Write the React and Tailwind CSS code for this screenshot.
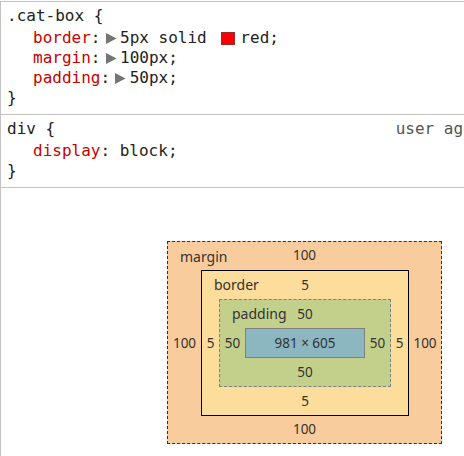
import React from "react";

function Tri() {
  return (
    <span className="flex h-[20px] w-[19.6px] shrink-0 items-center pl-[5.3px] pt-[1px]">
      <svg width="11" height="11" viewBox="0 0 11 11">
        <path d="M0 0 L10.6 5.5 L0 11 Z" fill="#747474" />
      </svg>
    </span>
  );
}

function Prop({ name, children }) {
  return (
    <div className="flex h-[20px] items-center whitespace-pre pl-[32px]">
      <span className="text-[#c80000]">{name}</span>
      <span>:</span>
      {children}
    </div>
  );
}

export default function App() {
  return (
    <div className="h-[456px] w-[464px] overflow-hidden bg-white">
      <div className="mt-px h-[455px] w-[608px] border-l border-t border-[#c2c2c2] font-['DejaVu_Sans_Mono',monospace] text-[16px] leading-[20px] text-[#222]">
        {/* rule 1 */}
        <div className="border-b border-[#c2c2c2] pb-[6px] pl-[6px] pt-[4px]">
          <div className="h-[20px] whitespace-pre">.cat-box {"{"}</div>
          <div className="-ml-[6px] mt-[2px]">
            <Prop name="border">
              <Tri />
              <span>5px solid </span>
              <span className="ml-[5px] mr-[5px] h-[13px] w-[14px] shrink-0 border border-[#9a2a2a] bg-[#ff0000]" />
              <span>red;</span>
            </Prop>
            <Prop name="margin">
              <Tri />
              <span>100px;</span>
            </Prop>
            <Prop name="padding">
              <Tri />
              <span>50px;</span>
            </Prop>
          </div>
          <div className="h-[20px]">{"}"}</div>
        </div>
        {/* rule 2 */}
        <div className="border-b border-[#c2c2c2] pb-[6px] pl-[6px] pt-[4px]">
          <div className="flex h-[20px] justify-between whitespace-pre pr-[10px]">
            <span>div {"{"}</span>
            <span className="text-[#555]">user agent stylesheet</span>
          </div>
          <div className="-ml-[6px] mt-[2px]">
            <Prop name="display">
              <span> block;</span>
            </Prop>
          </div>
          <div className="h-[20px]">{"}"}</div>
        </div>
        {/* box model */}
        <div className="flex justify-center pt-[53px] font-['Noto_Sans',sans-serif] text-[13.5px] leading-none text-[#333]">
          {/* margin */}
          <div className="relative flex h-[203px] w-[275px] flex-col border border-dashed border-[#333] bg-[#f9cc9d]">
            <span className="absolute left-[12px] top-0 flex h-[29px] items-center text-[14px]">margin</span>
            <div className="flex h-[29px] items-center justify-center">100</div>
            <div className="flex items-center">
              <div className="w-[33px] text-center">100</div>
              {/* border */}
              <div className="relative flex h-[146px] w-[208px] flex-col border border-black bg-[#fddd9b]">
                <span className="absolute left-[12px] top-0 flex h-[28px] items-center text-[14px]">border</span>
                <div className="flex h-[28px] items-center justify-center">5</div>
                <div className="flex items-center">
                  <div className="w-[17px] text-center">5</div>
                  {/* padding */}
                  <div className="relative flex h-[88px] w-[172px] flex-col border border-dashed border-[#808080] bg-[#c3d08b]">
                    <span className="absolute left-[12px] top-0 flex h-[28px] items-center text-[14px]">padding</span>
                    <div className="flex h-[28px] items-center justify-center">50</div>
                    <div className="flex items-center">
                      <div className="w-[25px] text-center">50</div>
                      <div className="flex h-[30px] w-[120px] items-center justify-center border border-[#808080] bg-[#8cb6c0]">
                        981 × 605
                      </div>
                      <div className="w-[25px] text-center">50</div>
                    </div>
                    <div className="flex h-[28px] items-center justify-center">50</div>
                  </div>
                  <div className="w-[17px] text-center">5</div>
                </div>
                <div className="flex h-[28px] items-center justify-center">5</div>
              </div>
              <div className="w-[32px] text-center">100</div>
            </div>
            <div className="flex h-[27px] items-center justify-center">100</div>
          </div>
        </div>
      </div>
    </div>
  );
}
